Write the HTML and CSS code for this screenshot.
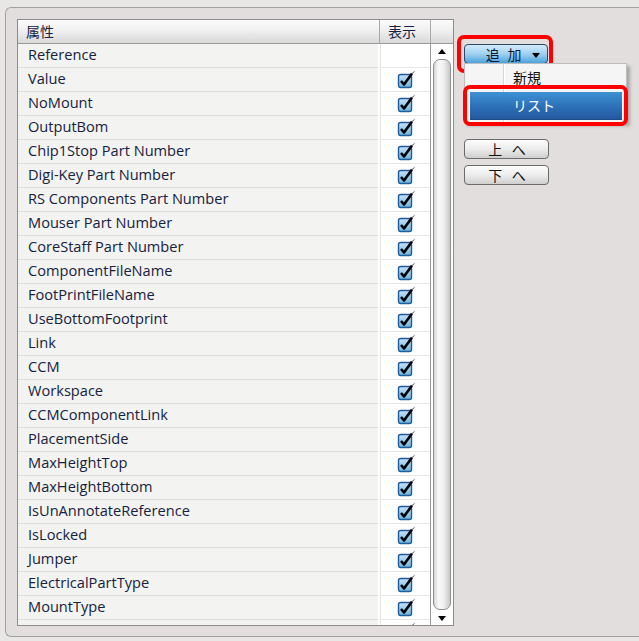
FILE: index.html
```html
<!DOCTYPE html>
<html lang="ja">
<head>
  <meta charset="UTF-8">
  <title>属性</title>
  <link rel="stylesheet" href="styles.css">
</head>
<body>
  <div class="panel">
    <!-- attribute table -->
    <div class="table">
      <div class="head">
        <div class="h-name">属性</div>
        <div class="h-show">表示</div>
        <div class="h-scroll"></div>
      </div>
      <div class="body">
        <div class="rows" id="rows"></div>
        <div class="scroll">
          <div class="arrow up"></div>
          <div class="thumb"></div>
          <div class="arrow down"></div>
        </div>
      </div>
    </div>

    <!-- side buttons -->
    <div class="side">
      <div class="add-wrap">
        <button class="btn-add">追 加 <span class="caret"></span></button>
        <div class="mark mark-add"></div>
        <div class="menu">
          <div class="menu-item">新規</div>
          <div class="menu-item active">リスト</div>
        </div>
        <div class="mark mark-list"></div>
      </div>
      <button class="btn btn-up">上 へ</button>
      <button class="btn">下 へ</button>
    </div>
  </div>

  <template id="check">
    <svg width="18" height="18" viewBox="0 0 18 18">
      <defs>
        <linearGradient id="cb" x1="0" y1="0" x2="0" y2="1">
          <stop offset="0" stop-color="#c4e3f7"/>
          <stop offset="1" stop-color="#6fb2e0"/>
        </linearGradient>
      </defs>
      <rect x="1.5" y="3.5" width="13" height="13" rx="2" fill="url(#cb)" stroke="#1f5d97" stroke-width="1.4"/>
      <path d="M4 10 L7 13.5 L15 2.5" fill="none" stroke="#000" stroke-width="2.6" stroke-linejoin="round"/>
      <path d="M15 2.5 L17.5 0.5" stroke="#333" stroke-width="0.8"/>
    </svg>
  </template>

  <script>
    const names = [
      'Reference', 'Value', 'NoMount', 'OutputBom', 'Chip1Stop Part Number',
      'Digi-Key Part Number', 'RS Components Part Number', 'Mouser Part Number',
      'CoreStaff Part Number', 'ComponentFileName', 'FootPrintFileName',
      'UseBottomFootprint', 'Link', 'CCM', 'Workspace', 'CCMComponentLink',
      'PlacementSide', 'MaxHeightTop', 'MaxHeightBottom', 'IsUnAnnotateReference',
      'IsLocked', 'Jumper', 'ElectricalPartType', 'MountType', 'PartCategory'
    ];
    const rows = document.getElementById('rows');
    const check = document.getElementById('check');
    names.forEach((n, i) => {
      const row = document.createElement('div');
      row.className = 'row';
      const name = document.createElement('div');
      name.className = 'name';
      name.textContent = n;
      const show = document.createElement('div');
      show.className = 'show';
      if (i > 0) show.appendChild(check.content.cloneNode(true));
      row.appendChild(name);
      row.appendChild(show);
      rows.appendChild(row);
    });
  </script>
</body>
</html>
```

FILE: styles.css
```css
body {
  margin: 0;
  height: 641px;
  overflow: hidden;
  background: #e9e7e6;
  font-family: "Open Sans", "Noto Sans CJK JP", sans-serif;
  font-size: 14px;
  color: #16223f;
  padding: 7px 0 0 5px;
  box-sizing: border-box;
}

.panel {
  display: flex;
  align-items: flex-start;
  height: 630px;
  box-sizing: border-box;
  border: 1px solid #a3a1a0;
  border-right: none;
  border-radius: 6px 0 0 6px;
  background: #e1dedd;
  padding: 11px 0 0 11px;
}

/* Table */
.table {
  width: 437px;
  height: 607px;
  box-sizing: border-box;
  border: 1px solid #8c8c8c;
  background: #fff;
  display: flex;
  flex-direction: column;
}

.head {
  display: flex;
  height: 24px;
  flex-shrink: 0;
  box-sizing: border-box;
  border-bottom: 1px solid #9a9a9a;
  background: linear-gradient(#fbfbfb, #f0f0f0 45%, #d9d9d9);
}

.head > div {
  box-sizing: border-box;
  line-height: 23px;
}

.h-name {
  width: 362px;
  padding-left: 8px;
  border-right: 1px solid #a8a8a8;
}

.h-show {
  width: 51px;
  padding-left: 8px;
  border-right: 1px solid #a8a8a8;
}

.h-scroll {
  flex: 1;
}

.body {
  flex: 1;
  display: flex;
  overflow: hidden;
}

.rows {
  width: 412px;
  overflow: hidden;
}

.row {
  display: flex;
  height: 24px;
}

.name {
  width: 360px;
  box-sizing: border-box;
  padding-left: 10px;
  font-size: 14.6px;
  line-height: 21px;
  background: #f3f3f1;
  border-bottom: 1px solid #dedede;
  box-shadow: 0 1px 0 #fff;
  white-space: nowrap;
}

.show {
  flex: 1;
  box-sizing: border-box;
  border-left: 1px solid #e2e2e2;
  border-bottom: 1px solid #e6e6e6;
  margin-left: 2px;
  display: flex;
  justify-content: center;
  align-items: center;
  padding-top: 1px;
}

/* Scrollbar */
.scroll {
  flex: 1;
  border-left: 1px solid #9c9c9c;
  display: flex;
  flex-direction: column;
  align-items: center;
  background: #fff;
}

.arrow {
  width: 0;
  height: 0;
  border-left: 4px solid transparent;
  border-right: 4px solid transparent;
  flex-shrink: 0;
}

.arrow.up {
  border-bottom: 5px solid #000;
  margin-top: 5px;
}

.arrow.down {
  border-top: 5px solid #000;
  margin-bottom: 4px;
}

.thumb {
  flex: 1;
  width: 18px;
  box-sizing: border-box;
  margin: 5px 0 6px;
  border: 1px solid #8e8e8e;
  border-radius: 7px;
  background: linear-gradient(90deg, #d6d6d6, #fafafa 30%, #f0f0f0 60%, #c8c8c8);
}

/* Side buttons */
.side {
  margin-left: 10px;
  padding-top: 25px;
  display: flex;
  flex-direction: column;
  width: 85px;
}

.add-wrap {
  position: relative;
  height: 95px;
}

.btn-add {
  width: 84px;
  height: 20px;
  padding: 0 0 0 14px;
  border: 1px solid #2c4a66;
  border-radius: 4px;
  background: linear-gradient(#d3ebfa, #9fd0f0 50%, #4aa3dc);
  font-family: inherit;
  font-size: 14px;
  color: #0d1a30;
  line-height: 17px;
  letter-spacing: 2px;
  text-align: center;
}

.caret {
  display: inline-block;
  width: 0;
  height: 0;
  border-left: 4px solid transparent;
  border-right: 4px solid transparent;
  border-top: 5px solid #000;
  margin-left: 3px;
  vertical-align: 2px;
}

.menu {
  position: absolute;
  left: 0;
  top: 19px;
  width: 163px;
  height: 60px;
  box-sizing: border-box;
  background: #f5f5f5;
  border: 1px solid #bdbdbd;
  box-shadow: 3px 3px 3px rgba(0, 0, 0, 0.25);
  background-image: linear-gradient(90deg, transparent 38px, #d4d4d4 38px, #d4d4d4 39px, #fff 39px, #fff 40px, transparent 40px);
}

.menu-item {
  height: 27px;
  line-height: 27px;
  padding-left: 48px;
  font-size: 14px;
  color: #111;
}

.menu-item.active {
  margin: 1px 4px 0 5px;
  padding-left: 43px;
  background: linear-gradient(#3d92d2, #2b6db5 60%, #25589f);
  color: #fff;
  border-bottom: 1px solid #1d4b8a;
}

/* red annotation frames */
.mark {
  position: absolute;
  border: 4px solid #ff0000;
  border-radius: 7px;
}

.mark-add {
  left: -7px;
  top: -9px;
  width: 88px;
  height: 30px;
}

.mark-list {
  left: -1px;
  top: 41px;
  width: 157px;
  height: 33px;
}

.btn {
  width: 85px;
  height: 20px;
  margin-bottom: 6px;
  padding: 0 0 0 4px;
  border: 1px solid #6b6b6b;
  border-radius: 4px;
  background: linear-gradient(#fdfdfd, #ececec 50%, #cfcfcf);
  font-family: inherit;
  font-size: 14px;
  line-height: 17px;
  color: #111;
  letter-spacing: 3px;
}
```
